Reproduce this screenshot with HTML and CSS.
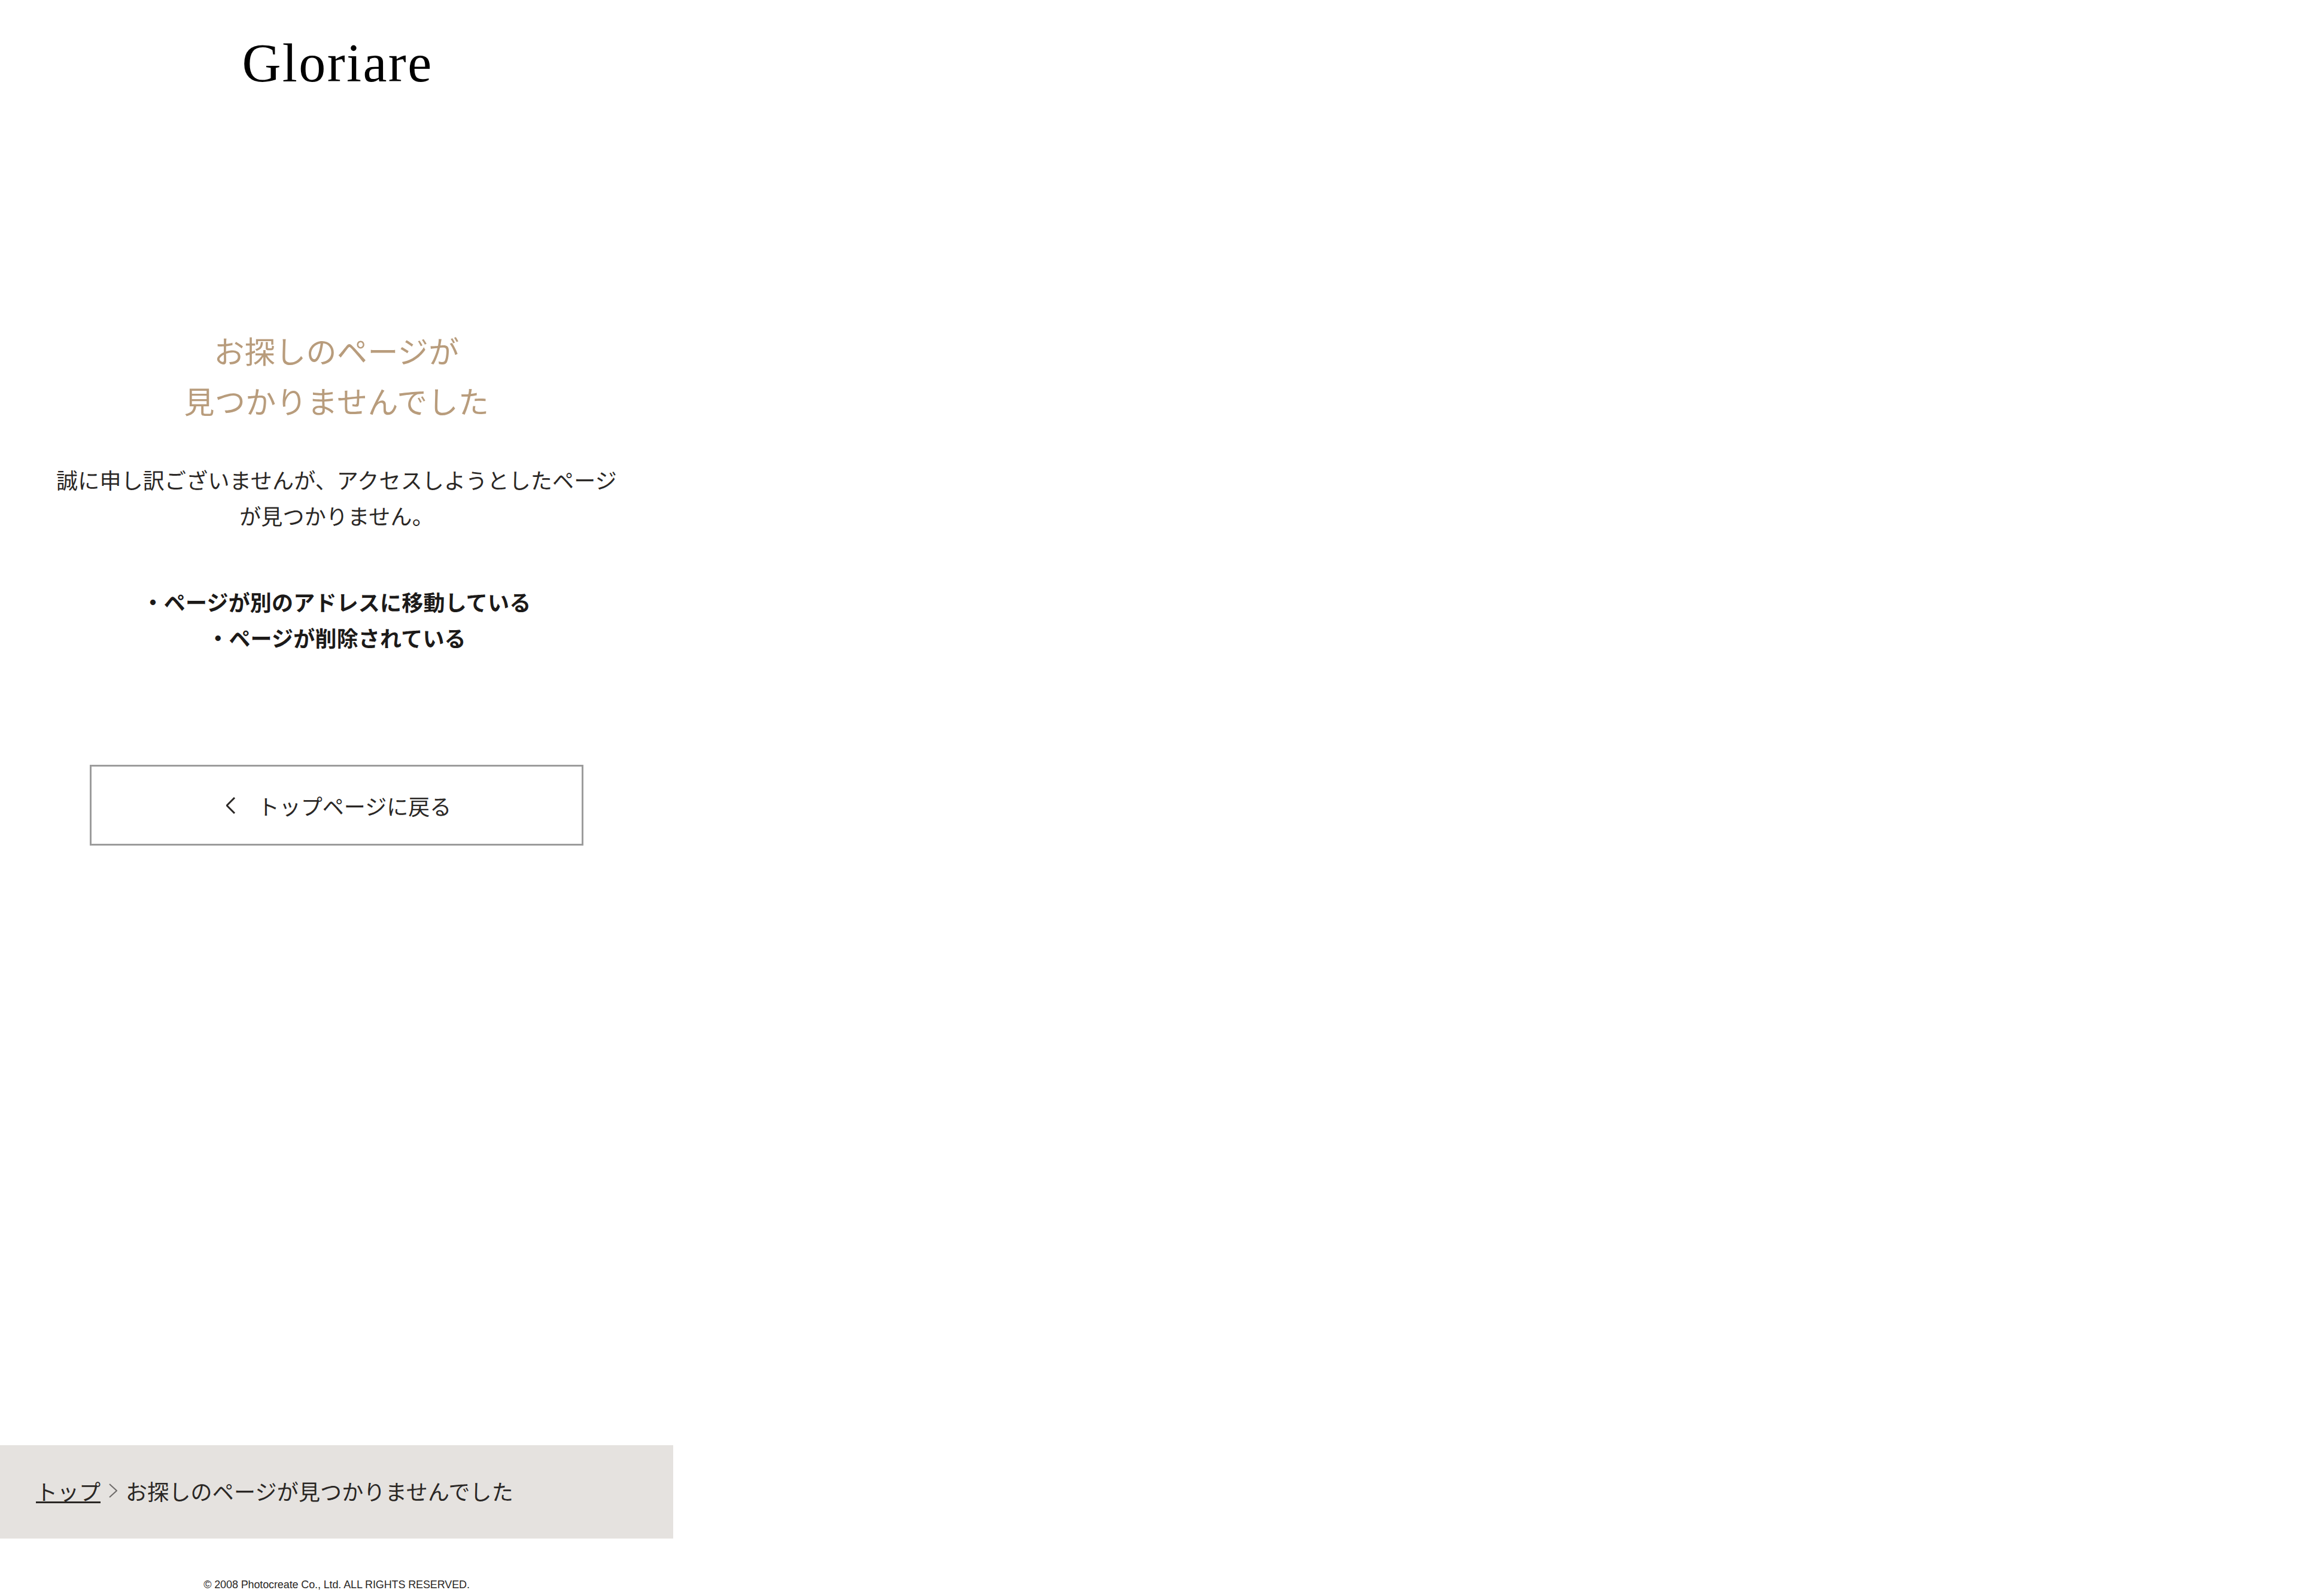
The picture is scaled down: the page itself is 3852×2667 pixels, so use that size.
FILE: index.html
```html
<!DOCTYPE html>
<html lang="ja">
<head>
<meta charset="utf-8">
<title>お探しのページが見つかりませんでした</title>
<link rel="stylesheet" href="styles.css">
</head>
<body>
<div class="page">
  <header class="header"><a class="logo">Gloriare</a></header>
  <main class="main">
    <h1 class="title">お探しのページが<br>見つかりませんでした</h1>
    <p class="lead">誠に申し訳ございませんが、アクセスしようとしたページが見つかりません。</p>
    <p class="reasons">・ページが別のアドレスに移動している<br>・ページが削除されている</p>
    <a class="back">
      <svg class="back-icon" viewBox="0 0 16 28" width="16" height="28"><polyline points="14,1 1,14 14,27"/></svg>
      <span>トップページに戻る</span>
    </a>
  </main>
  <nav class="crumbs">
    <a class="crumb-link">トップ</a>
    <svg class="crumb-sep" viewBox="0 0 14 24" width="14" height="24"><polyline points="1,1 13,12 1,23"/></svg>
    <span class="crumb-current">お探しのページが見つかりませんでした</span>
  </nav>
  <footer class="footer">© 2008 Photocreate Co., Ltd. ALL RIGHTS RESERVED.</footer>
</div>
</body>
</html>
```
FILE: styles.css
```css
* { box-sizing: border-box; }
html, body { margin: 0; padding: 0; background: #fff; }
body {
  font-family: "Noto Sans CJK JP", "Liberation Sans", sans-serif;
  font-weight: 400;
  color: #2a2725;
  font-size: 36px;
}
.page {
  width: 1125px;
  height: 2667px;
  display: flex;
  flex-direction: column;
}
.header {
  height: 543px;
  padding: 54px 0 0 3px;
  display: flex;
  justify-content: center;
  align-items: flex-start;
}
.logo {
  font-family: "Liberation Serif", serif;
  font-weight: 400;
  font-size: 90px;
  line-height: 104px;
  letter-spacing: 2.4px;
  color: #000;
}
.main {
  flex: 1;
  display: flex;
  flex-direction: column;
  align-items: center;
  padding: 0 90px;
  text-align: center;
}
.title {
  margin: 0 0 60px;
  font-size: 51px;
  line-height: 84px;
  font-weight: 400;
  letter-spacing: 0.4px;
  color: #b89c7c;
}
.lead {
  margin: 0 0 84px;
  line-height: 60px;
  letter-spacing: 0.2px;
}
.reasons {
  margin: 0 0 183px;
  line-height: 60px;
  font-weight: 700;
  letter-spacing: 0.2px;
  color: #1c1a19;
}
.back {
  width: 825px;
  height: 135px;
  flex: none;
  border: 3px solid #9c9c9c;
  padding-left: 7px;
  display: flex;
  align-items: center;
  justify-content: center;
  gap: 37px;
}
.back-icon { flex: none; }
.back-icon polyline {
  fill: none;
  stroke: #2a2725;
  stroke-width: 3;
}
.crumbs {
  height: 156px;
  flex: none;
  background: #e5e2df;
  padding: 0 60px 4px;
  display: flex;
  align-items: center;
  gap: 14px;
}
.crumb-link {
  text-decoration: underline;
  text-decoration-thickness: 3px;
}
.crumb-sep { flex: none; }
.crumb-sep polyline {
  fill: none;
  stroke: #6e6b69;
  stroke-width: 2;
}
.crumb-current { letter-spacing: 0.2px; }
.footer {
  height: 96px;
  flex: none;
  padding-top: 65px;
  text-align: center;
  font-family: "Liberation Sans", sans-serif;
  font-weight: 400;
  font-size: 18px;
  line-height: 24px;
  letter-spacing: -0.12px;
}
```
